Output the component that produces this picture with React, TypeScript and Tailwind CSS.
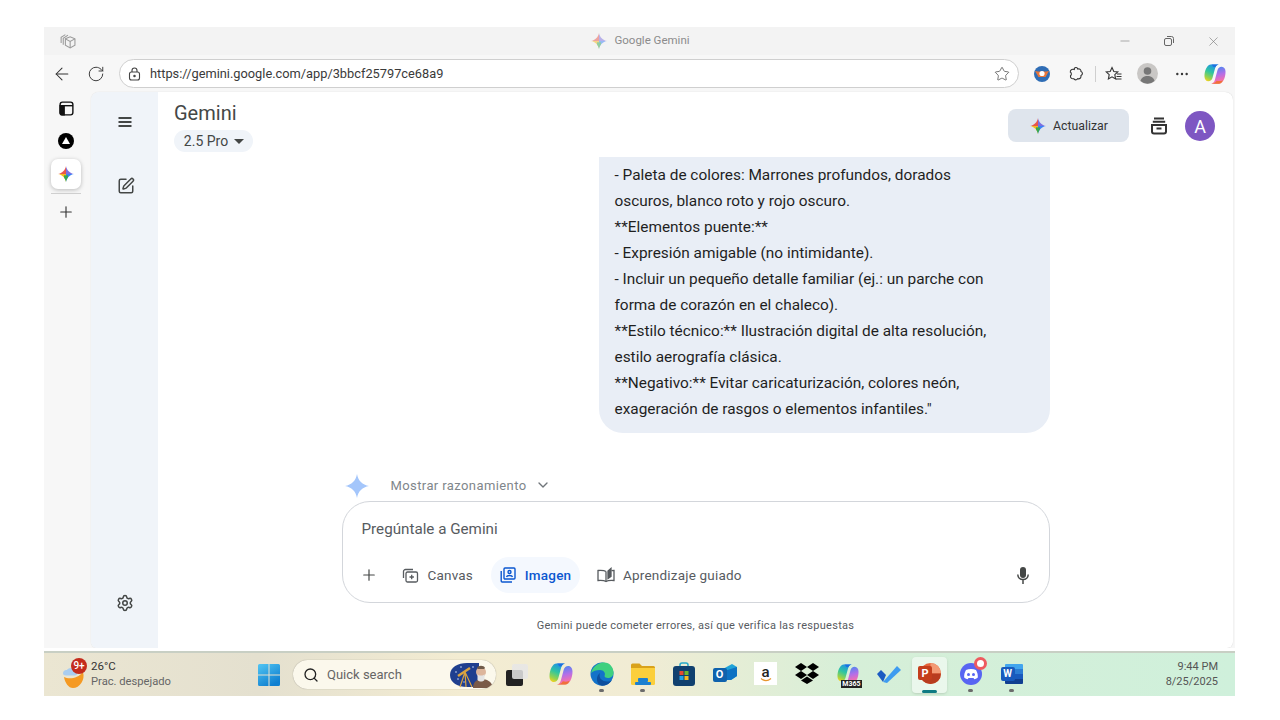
import type { ReactNode } from "react";
import { Plus, RotateCw, ArrowLeft, Star, Minus, X, ChevronDown, SquarePen, Settings, Ellipsis, Search } from "lucide-react";

const STAR = "M12 0C13 6.500 17.500 11 24 12C17.500 13 13 17.500 12 24C11 17.500 6.500 13 0 12C6.500 11 11 6.500 12 0Z";

// estrella de colores de gemini
function ColorStar({ id, size }: { id: string; size: number }) {
  return (
    <svg width={size} height={size} viewBox="0 0 24 24">
      <defs>
        <clipPath id={id}>
          <path d="M12 0C12.900 6 18 11.100 24 12C18 12.900 12.900 18 12 24C11.100 18 6 12.900 0 12C6 11.100 11.100 6 12 0Z" />
        </clipPath>
      </defs>
      <g clipPath={`url(#${id})`}>
        <rect x="0" y="0" width="12" height="12" fill="#e8564b" />
        <rect x="12" y="0" width="12" height="12" fill="#7c6fe0" />
        <rect x="12" y="12" width="12" height="12" fill="#3b82f6" />
        <rect x="0" y="12" width="12" height="12" fill="#f3b820" />
        <rect x="9" y="14" width="6" height="10" fill="#34a853" />
      </g>
    </svg>
  );
}

function CopilotIcon({ id, size }: { id: string; size: number }) {
  return (
    <svg width={size} height={size} viewBox="0 0 24 24">
      <defs>
        <linearGradient id={`${id}a`} x1="0.6" y1="0" x2="0.2" y2="1">
          <stop offset="0" stopColor="#1f8fe8" />
          <stop offset="0.45" stopColor="#2fc6a0" />
          <stop offset="0.8" stopColor="#9ad24a" />
          <stop offset="1" stopColor="#f7d21f" />
        </linearGradient>
        <linearGradient id={`${id}b`} x1="0.5" y1="0" x2="0.7" y2="1">
          <stop offset="0" stopColor="#4f86f0" />
          <stop offset="0.45" stopColor="#b36fe8" />
          <stop offset="0.8" stopColor="#f26fb0" />
          <stop offset="1" stopColor="#f58a5a" />
        </linearGradient>
      </defs>
      <path d="M7.500 1.500h8.500c-2.300.5-3.300 2-3.900 4.200L9.300 16.200C8.700 18.500 7 20 4.800 20 2 20 .5 17.500 .5 14.500.5 8 3.500 1.500 7.500 1.500Z" fill={`url(#${id}a)`} />
      <path d="M16.500 22.500H8c2.300-.5 3.300-2 3.900-4.200l2.800-10.500C15.300 5.500 17 4 19.200 4c2.800 0 4.300 2.500 4.300 5.500 0 6.500-3 13-7 13Z" fill={`url(#${id}b)`} />
      <path d="M8 1.500h8c-2 .5-3 1.500-3.600 3L10 4.200C9.600 3 9 2 8 1.500Z" fill="#1c6fe0" />
      <path d="M8 22.500h8c2-.2 3.500-1.500 4.500-3.800-1.800 1-4 1.200-6.700.6-.8 1.800-2.300 2.800-5.800 3.200Z" fill="#f0713a" />
    </svg>
  );
}

function TaskItem({ children, dot, active }: { children: ReactNode; dot?: boolean; active?: boolean }) {
  return (
    <div className="relative flex h-[44px] w-[41px] shrink-0 items-center justify-center">
      {active && <div className="absolute left-[3px] top-[4px] h-[36px] w-[35px] rounded bg-white/50 shadow-sm" />}
      <div className="relative flex h-[24px] w-[24px] -translate-y-[1px] items-center justify-center">{children}</div>
      {dot && <div className="absolute bottom-[5px] left-[18px] h-[3px] w-[5px] rounded-full bg-[#6b6b6b]" />}
      {active && <div className="absolute bottom-[4px] left-[13px] h-[3px] w-[15px] rounded-full bg-[#0f7b83]" />}
    </div>
  );
}

export default function App() {
  return (
    <div className="h-[720px] w-[1280px] overflow-hidden bg-white pl-[44px] pt-[27px] text-[#444746] [font-family:Roboto,'Noto_Sans',sans-serif]">
      <div className="flex h-[669px] w-[1191px] flex-col bg-[#f7f7f7]">
        {/* barra de titulo */}
        <div className="relative flex h-[28px] items-center bg-[#f3f3f3] pl-[15px] pr-[14px]">
          <svg width="17" height="17" viewBox="0 0 16 16" fill="none" stroke="#9a9a9a" strokeWidth="1">
            <path d="M6 5.500 10.500 3.500 15 5.500v6L10.500 14 6 11.500Z" />
            <path d="M6 5.500 10.500 8 15 5.500M10.500 8v6" />
            <path d="M4 11V5l4.500-3M2 9.500V4l4-2.500" />
          </svg>
          <div className="flex flex-1 items-center justify-center gap-[7px] pl-[87px] text-[11.500px] text-[#8b8b8b]">
            <span className="opacity-50"><ColorStar id="tab" size={16} /></span>
            <span>Google Gemini</span>
          </div>
          <div className="flex items-center gap-[31px] text-[#777]">
            <Minus size={14} strokeWidth={1} />
            <svg width="12" height="12" viewBox="0 0 12 12" fill="none" stroke="#666" strokeWidth="1">
              <rect x="1.500" y="3.500" width="7" height="7" rx="1.500" />
              <path d="M4 1.500h4.500a2 2 0 0 1 2 2V8" />
            </svg>
            <X size={15} strokeWidth={1} />
          </div>
        </div>

        {/* barra de navegacion */}
        <div className="flex h-[37px] items-center pl-[8px] pr-[8px]">
          <ArrowLeft size={20} strokeWidth={1.25} className="text-[#333]" />
          <RotateCw size={18} strokeWidth={1.25} className="ml-[15px] text-[#333]" />
          <div className="ml-[14px] flex h-[29px] w-[900px] shrink-0 items-center rounded-full border border-[#cfcfcf] bg-white pl-[8px] pr-[8px]">
            <svg width="13" height="14" viewBox="0 0 13 14" fill="none" stroke="#444" strokeWidth="1.100">
              <rect x="1.500" y="5" width="10" height="8" rx="2" />
              <path d="M4 5V3.500a2.500 2.500 0 0 1 5 0V5" />
              <circle cx="6.500" cy="9" r=".7" fill="#444" />
            </svg>
            <span className="ml-[9px] text-[12.800px] text-[#3a3a3a]">https://gemini.google.com/app/3bbcf25797ce68a9</span>
            <Star size={16} strokeWidth={1.100} className="ml-auto text-[#444]" />
          </div>
          <svg width="16" height="16" viewBox="0 0 16 16" className="ml-[15px]">
            <circle cx="8" cy="8" r="8" fill="#2f6db5" />
            <path d="M1 5c3 .8 11 .8 14 0l-3.500 6h-7Z" fill="#e8763a" />
            <circle cx="8" cy="7.500" r="2.600" fill="#fff" />
          </svg>
          <svg width="16" height="16" viewBox="0 0 16 16" fill="none" stroke="#333" strokeWidth="1.100" className="ml-[18px]">
            <path d="M6.300 2.600c.8-1.600 3-1.300 3.400.4 2-.4 3.500.4 3.300 2.600 1.900.6 1.900 3.200 0 3.800.3 2.600-1.200 3.900-3.500 3.300-.8 1.500-3 1.500-3.700 0-2.200.4-3.700-.9-3.300-3 1.200-.8 1.200-2.800-.2-3.600-.2-2.300 1.700-3.300 4-2.500Z" />
          </svg>
          <div className="ml-[11px] h-[16px] w-px bg-[#cfcfcf]" />
          <svg width="17" height="16" viewBox="0 0 17 16" fill="none" stroke="#333" strokeWidth="1.100" className="ml-[9px]">
            <path d="M7 1.500 8.800 5.500l4 .4-3 2.800.8 4.300L7 10.800 3.400 13l.8-4.300-3-2.800 4-.4Z" />
            <path d="M12 8h4.500M11.500 10.500h5M11 13h5.500" />
          </svg>
          <svg width="21" height="21" viewBox="0 0 21 21" className="ml-[15px]">
            <circle cx="10.500" cy="10.500" r="10.500" fill="#c9c7c5" />
            <circle cx="10.500" cy="8" r="3.800" fill="#777" />
            <path d="M3.500 18c.8-3.500 3.500-5 7-5s6.200 1.500 7 5a10.500 10.500 0 0 1-14 0Z" fill="#777" />
          </svg>
          <Ellipsis size={16} strokeWidth={1.600} className="ml-[16px] text-[#333]" />
          <span className="ml-[14px] flex"><CopilotIcon id="cpa" size={22} /></span>
        </div>

        {/* cuerpo */}
        <div className="flex h-[556px]">
          <div className="flex w-[47px] flex-col items-center pr-[3px] pt-[9px]">
            <svg width="15" height="15" viewBox="0 0 16 16" fill="none" stroke="#111" strokeWidth="1.500">
              <rect x="1.200" y="1.200" width="13.600" height="13.600" rx="2.500" />
              <path d="M1.200 5h13.600" />
              <path d="M1.200 5h4.300v9.800H3.500a2.300 2.300 0 0 1-2.300-2.300Z" fill="#111" />
            </svg>
            <svg width="16" height="16" viewBox="0 0 16 16" className="mt-[17px]">
              <circle cx="8" cy="8" r="8" fill="#000" />
              <path d="M8 4 12 11H4Z" fill="#fff" />
            </svg>
            <div className="mt-[10px] flex h-[30px] w-[30px] items-center justify-center rounded-[7px] bg-white shadow-[0_1px_4px_rgba(0,0,0,0.25)]">
              <ColorStar id="side" size={16} />
            </div>
            <div className="mt-[4px] h-px w-[30px] bg-[#cfcfcf]" />
            <Plus size={18} strokeWidth={1.500} className="mt-[9px] text-[#333]" />
          </div>

          <div className="flex w-[1142px] overflow-hidden rounded-t-[8px] rounded-b-[6px] bg-white shadow-[0_0_1px_rgba(0,0,0,0.2)]">
            <div className="flex w-[67px] flex-col items-center bg-[#f0f4f9] pb-[36px] pl-[1px] pt-[21px]">
              <svg width="18" height="18" viewBox="0 0 18 18" fill="none" stroke="#444746" strokeWidth="1.800">
                <path d="M2.500 5h13M2.500 9h13M2.500 13h13" />
              </svg>
              <SquarePen size={18} strokeWidth={2} className="mt-[46px] translate-x-[1px] text-[#444746]" />
              <Settings size={18} strokeWidth={2} className="mt-auto text-[#444746]" />
            </div>

            <div className="flex min-w-0 flex-1 flex-col">
              <div className="flex h-[65px] items-start pl-[16px] pr-[18px]">
                <div className="pt-[8px]">
                  <div className="text-[20px] leading-[26px] text-[#444746]">Gemini</div>
                  <div className="mt-[4px] flex h-[22px] w-[79px] items-center justify-center gap-[6px] rounded-full bg-[#f0f4f9] pl-[1px] text-[14px]">
                    <span>2.5 Pro</span>
                    <svg width="10" height="5" viewBox="0 0 10 5"><path d="M0 0h10L5 5Z" fill="#444746" /></svg>
                  </div>
                </div>
                <div className="ml-auto mt-[17px] flex h-[33px] w-[121px] items-center justify-center gap-[7px] rounded-[8px] bg-[#dfe5ed] pl-[1px] text-[12.300px] text-[#333]">
                  <ColorStar id="upd" size={16} />
                  <span className="pt-[2px]">Actualizar</span>
                </div>
                <svg width="18" height="18" viewBox="0 0 18 18" fill="none" stroke="#333" strokeWidth="2" className="ml-[21px] mt-[25px]">
                  <path d="M4 1.500h10M2.800 4.800h12.400" />
                  <path d="M2 8h14v6.500a2 2 0 0 1-2 2H4a2 2 0 0 1-2-2Z" />
                  <path d="M6.500 11.500h5" />
                </svg>
                <div className="ml-[17px] mt-[19px] flex h-[30px] w-[30px] items-center justify-center rounded-full bg-[#7e57c2] text-[18px] text-white">A</div>
              </div>

              <div className="mx-auto w-[708px]">
                <div className="ml-auto w-[451px] rounded-b-[24px] bg-[#e9eef6] pb-[11px] pl-[16px] pr-[40px] pt-[5px] text-[15.400px] leading-[26px] text-[#1f1f1f]">
                  <p>- Paleta de colores: Marrones profundos, dorados oscuros, blanco roto y rojo oscuro.</p>
                  <p>**Elementos puente:**</p>
                  <p>- Expresión amigable (no intimidante).</p>
                  <p>- Incluir un pequeño detalle familiar (ej.: un parche con forma de corazón en el chaleco).</p>
                  <p>**Estilo técnico:** Ilustración digital de alta resolución, estilo aerografía clásica.</p>
                  <p>**Negativo:** Evitar caricaturización, colores neón, exageración de rasgos o elementos infantiles."</p>
                </div>

                <div className="mt-[40px] flex h-[24px] items-center pl-[3px]">
                  <svg width="24" height="24" viewBox="0 0 24 24" className="translate-y-[1px]"><path d={STAR} fill="#a4c6fb" /></svg>
                  <span className="ml-[22px] translate-y-[1px] text-[13px] tracking-[0.4px] text-[#80868b]">Mostrar razonamiento</span>
                  <ChevronDown size={16} strokeWidth={2} className="ml-[8px] text-[#70757a]" />
                </div>

                <div className="mt-[4px] flex h-[102px] flex-col rounded-[28px] border border-[#d3d6db] pl-[19px] pr-[18px]">
                  <div className="pt-[17px] text-[15.200px] leading-[20px] text-[#575b5f]">Pregúntale a Gemini</div>
                  <div className="-ml-[2px] mt-[18px] flex h-[36px] items-center text-[13.500px] tracking-[0.2px] text-[#575b5f]">
                    <Plus size={18} strokeWidth={1.600} className="text-[#444746]" />
                    <svg width="17" height="17" viewBox="0 0 17 17" fill="none" stroke="#575b5f" strokeWidth="1.300" className="ml-[24px]">
                      <path d="M1.500 11V4.500a2 2 0 0 1 2-2H11" />
                      <rect x="4" y="5" width="11.500" height="10" rx="1.500" />
                      <path d="M9.700 7.800v4.400M7.500 10h4.400" />
                    </svg>
                    <span className="ml-[9px]">Canvas</span>
                    <div className="ml-[18px] flex h-[36px] w-[89px] items-center justify-center gap-[9px] rounded-full bg-[#f4f8fe] font-medium text-[#0b57d0]">
                      <svg width="16" height="16" viewBox="0 0 16 16" fill="none" stroke="#0b57d0" strokeWidth="1.400">
                        <rect x="4" y="1" width="11" height="11" rx="1" />
                        <circle cx="9.500" cy="5" r="1.500" />
                        <path d="M6.500 10c.5-2 5.500-2 6 0" />
                        <path d="M1.200 4v10a1 1 0 0 0 1 1H12" />
                      </svg>
                      <span>Imagen</span>
                    </div>
                    <svg width="18" height="16" viewBox="0 0 18 16" fill="none" stroke="#575b5f" strokeWidth="1.300" className="ml-[17px]">
                      <path d="M9 4.500C7.500 3.500 4 3.300 1 3.500v10c3-.2 6.500 0 8 1 1.500-1 5-1.200 8-1v-10c-1 0-2 0-2.500.1" />
                      <path d="M9 4.500v10" />
                      <path d="M11 11.500V4l3-2.500v8Z" fill="#575b5f" />
                    </svg>
                    <span className="ml-[8px]">Aprendizaje guiado</span>
                    <svg width="12" height="17" viewBox="0 0 12 17" className="ml-auto mr-[2px]">
                      <rect x="3" y="0" width="6" height="11" rx="3" fill="#444746" />
                      <path d="M.8 7.500c0 3 2.300 5 5.200 5s5.200-2 5.200-5M6 12.500V17" fill="none" stroke="#444746" strokeWidth="1.500" />
                    </svg>
                  </div>
                </div>

                <div className="mt-[15px] text-center text-[11px] tracking-[0.28px] text-[#575b5f]">Gemini puede cometer errores, así que verifica las respuestas</div>
              </div>
            </div>
          </div>
        </div>

        <div className="h-[3px] bg-white" />

        {/* barra de tareas */}
        <div className="flex h-[45px] items-center border-t-2 border-[#c8cfc4] bg-[linear-gradient(90deg,#ebe6d2_0%,#e4e0cf_18%,#f3ecd2_35%,#f1ecd4_50%,#d6efd8_68%,#cff0db_100%)] text-[#444]">
          <div className="flex w-[206px] items-center pl-[17px]">
            <div className="relative h-[30px] w-[30px]">
              <svg width="26" height="28" viewBox="0 0 26 28" className="absolute left-[1px] top-[1px]">
                <path d="M2 16c5 2.500 14 1.500 19-5 2.500 8-3.500 16-10 16-4.500 0-8-5-9-11Z" fill="#f59a23" />
                <path d="M1 12.500C1 10 3 8.500 5 9c1-2 5-2.500 6.500 0 2-.5 4 1 4 3s-2 2.500-3.500 2.500H4c-1.800 0-3-1-3-2Z" fill="#a9cdf0" />
              </svg>
              <div className="absolute left-[10px] top-[-2px] flex h-[16px] w-[16px] items-center justify-center rounded-full bg-[#c42b1c] text-[10px] font-medium leading-none text-white">9+</div>
            </div>
            <div className="mb-[2px] text-[11.500px] leading-[15px]">
              <div className="text-[#333]">26°C</div>
              <div className="text-[11.200px] text-[#666]">Prac. despejado</div>
            </div>
          </div>
          <div className="flex w-[38px] justify-center">
            <svg width="22" height="22" viewBox="0 0 22 22">
              <defs>
                <linearGradient id="win" x1="0" y1="0" x2="0.6" y2="1">
                  <stop offset="0" stopColor="#52c6f3" />
                  <stop offset="1" stopColor="#0f7fd0" />
                </linearGradient>
              </defs>
              <path d="M0 1.500A1.500 1.500 0 0 1 1.500 0h9v10.500H0ZM11.500 0h9A1.500 1.500 0 0 1 22 1.500v9H11.500ZM0 11.500h10.500V22h-9A1.500 1.500 0 0 1 0 20.500ZM11.500 11.500H22v9a1.500 1.500 0 0 1-1.500 1.500h-9Z" fill="url(#win)" />
            </svg>
          </div>
          <div className="ml-[5px] flex h-[29px] w-[203px] items-center overflow-hidden rounded-full bg-[#fbf8ec] pl-[10px] shadow-[0_0_1px_rgba(0,0,0,0.4)]">
            <Search size={16} strokeWidth={2} className="text-[#222]" />
            <span className="ml-[8px] text-[13px] text-[#666]">Quick search</span>
            <svg width="44" height="26" viewBox="0 0 44 26" className="ml-auto mr-[3px]">
              <path d="M1 13C1 5 9 1 18 1h12v24H18C9 25 1 21 1 13Z" fill="#1f3f8f" />
              <circle cx="7" cy="10" r=".8" fill="#cfe0ff" />
              <circle cx="12" cy="5" r=".8" fill="#cfe0ff" />
              <circle cx="9" cy="17" r=".8" fill="#cfe0ff" />
              <circle cx="24" cy="5" r=".8" fill="#cfe0ff" />
              <circle cx="15" cy="20" r=".7" fill="#cfe0ff" />
              <path d="M9 14 21 6" stroke="#d9a441" strokeWidth="2.500" fill="none" />
              <path d="M16 10l-5 15M16 10l1 15M16 10l7 15" stroke="#d9a441" strokeWidth="1.200" fill="none" />
              <path d="M24 26c0-7 5-9 9-9s10 2 11 9Z" fill="#7a5a48" />
              <circle cx="32" cy="10" r="5" fill="#dcb59c" />
              <path d="M28 6c1-3 7-3 8 0l-1 1h-6Z" fill="#6f5a4a" />
              <path d="M28.500 12c1 2 6 2 7 0v6c-2 2-5 2-7 0Z" fill="#e4e4e4" />
            </svg>
          </div>

          <div className="ml-[4px] flex w-[34px] justify-center">
            <svg width="24" height="24" viewBox="0 0 24 24">
              <rect x="1" y="7" width="17" height="16" rx="2" fill="#222" />
              <rect x="7" y="1" width="16" height="15" rx="2" fill="#e6e6e6" fillOpacity="0.85" />
            </svg>
          </div>
          <div className="ml-[6px] flex">
            <TaskItem><CopilotIcon id="cpb" size={24} /></TaskItem>
            <TaskItem dot>
              <svg width="24" height="24" viewBox="0 0 24 24">
                <circle cx="12" cy="12" r="11.500" fill="#1373c9" />
                <path d="M1 11C3 3 10 .5 14 .5c6 0 9.500 5 9.500 10 0 4-3 5.500-5.500 5.500-2 0-3.500-1-3.500-2 1.500-3-1-6-4.500-6C6 8 3 9 1 11Z" fill="#3fd07f" />
                <path d="M11 23.500C6 22 5.500 14 10 11c-1.500 4 1 8.500 7 8.500 2 0 3.500-.5 5-1.500-2.500 4-7 6.500-11 5.500Z" fill="#0e4f9e" />
              </svg>
            </TaskItem>
            <TaskItem dot>
              <svg width="24" height="22" viewBox="0 0 24 22">
                <path d="M0 2a1.500 1.500 0 0 1 1.500-1.500h7L11 3h11.500A1.500 1.500 0 0 1 24 4.500V8H0Z" fill="#d9a21b" />
                <path d="M0 5h24v15.500a1.500 1.500 0 0 1-1.500 1.500h-21A1.500 1.500 0 0 1 0 20.500Z" fill="#fbcf3c" />
                <rect x="7" y="15" width="10" height="4" rx="1" fill="#1c80d0" />
                <rect x="4" y="19" width="16" height="3" rx="1" fill="#1c80d0" />
              </svg>
            </TaskItem>
            <TaskItem>
              <svg width="22" height="24" viewBox="0 0 22 24">
                <path d="M7 6V3a2 2 0 0 1 2-2h4a2 2 0 0 1 2 2v3" fill="none" stroke="#26a9c9" strokeWidth="1.500" />
                <rect x="0" y="4" width="22" height="20" rx="3" fill="#10406f" />
                <rect x="6.500" y="9" width="4" height="4" fill="#e8492f" />
                <rect x="11.500" y="9" width="4" height="4" fill="#70b62b" />
                <rect x="6.500" y="14" width="4" height="4" fill="#22a2e8" />
                <rect x="11.500" y="14" width="4" height="4" fill="#f8b81f" />
              </svg>
            </TaskItem>
            <TaskItem>
              <div className="relative h-[20px] w-[24px]">
                <svg width="24" height="20" viewBox="0 0 24 20" className="absolute inset-0">
                  <path d="M8 6 19 0l5 3v9l-6 4H8Z" fill="#1fa3d8" />
                  <path d="M8 8l16-5v9l-6 4H8Z" fill="#0d72c3" />
                </svg>
                <div className="absolute left-0 top-[4px] flex h-[14px] w-[14px] items-center justify-center rounded-[2px] bg-[#0f62ad] text-[11px] font-bold leading-none text-white">O</div>
              </div>
            </TaskItem>
            <TaskItem>
              <div className="flex h-[23px] w-[23px] flex-col items-center justify-center bg-white text-[15px] font-medium leading-[12px] text-[#222]">
                a
                <svg width="12" height="4" viewBox="0 0 12 4"><path d="M1 .5c3 2.500 7 2.500 10 0" fill="none" stroke="#e8962e" strokeWidth="1.200" /></svg>
              </div>
            </TaskItem>
            <TaskItem>
              <svg width="24" height="21" viewBox="0 0 24 21" fill="#000">
                <path d="M6 0 12 4 6 8 0 4ZM18 0l6 4-6 4-6-4ZM6 8l6 4-6 4-6-4ZM18 8l6 4-6 4-6-4ZM6 17.500l6-4 6 4-6 3.500Z" />
              </svg>
            </TaskItem>
            <TaskItem>
              <CopilotIcon id="cpc" size={22} />
              <div className="absolute bottom-[-2px] right-[-2px] bg-[#222] px-[1px] text-[7px] font-bold leading-[8px] text-white">M365</div>
            </TaskItem>
            <TaskItem>
              <svg width="24" height="18" viewBox="0 0 24 18">
                <path d="M0 9 4 5 9 10 6 17Z" fill="#1c5bc2" />
                <path d="M6 17 20 1 24 5 10 18Z" fill="#3e9cf0" />
              </svg>
            </TaskItem>
            <TaskItem active>
              <div className="relative h-[21px] w-[23px]">
                <svg width="21" height="21" viewBox="0 0 21 21" className="absolute right-0 top-0">
                  <circle cx="10.500" cy="10.500" r="10.500" fill="#e5633a" />
                  <path d="M10.500 0a10.500 10.500 0 0 1 10.500 10.500H10.500Z" fill="#f39a74" />
                  <path d="M0 10.500h21a10.500 10.500 0 0 1-21 0Z" fill="#b83c1f" />
                </svg>
                <div className="absolute left-0 top-[3px] flex h-[14px] w-[14px] items-center justify-center rounded-[2px] bg-[#c43e1c] text-[11px] font-bold leading-none text-white">P</div>
              </div>
            </TaskItem>
            <TaskItem dot>
              <svg width="22" height="22" viewBox="0 0 22 22">
                <circle cx="11" cy="11" r="11" fill="#5865f2" />
                <path d="M6 7c3-1.300 7-1.300 10 0 1.500 2.500 2 5 1.800 7.500-1.300 1-2.500 1.500-3.500 1.800l-.8-1.300H8.500l-.8 1.300c-1-.3-2.200-.8-3.500-1.800C4 12 4.500 9.500 6 7Z" fill="#fff" />
                <circle cx="8.500" cy="11.500" r="1.500" fill="#5865f2" />
                <circle cx="13.500" cy="11.500" r="1.500" fill="#5865f2" />
              </svg>
              <div className="absolute right-[-4px] top-[-5px] flex h-[13px] w-[13px] items-center justify-center rounded-full bg-[#ee5a5f]">
                <div className="h-[7px] w-[7px] rounded-full bg-white" />
              </div>
            </TaskItem>
            <TaskItem dot>
              <div className="relative h-[20px] w-[22px]">
                <svg width="18" height="20" viewBox="0 0 18 20" className="absolute right-0 top-0">
                  <path d="M1 0h16a1 1 0 0 1 1 1v4H0V1a1 1 0 0 1 1-1Z" fill="#41a5ee" />
                  <rect x="0" y="5" width="18" height="5" fill="#2b7cd3" />
                  <rect x="0" y="10" width="18" height="5" fill="#185abd" />
                  <path d="M0 15h18v4a1 1 0 0 1-1 1H1a1 1 0 0 1-1-1Z" fill="#103f91" />
                </svg>
                <div className="absolute left-0 top-[3px] flex h-[14px] w-[14px] items-center justify-center rounded-[2px] bg-[#185abd] text-[10px] font-bold leading-none text-white">W</div>
              </div>
            </TaskItem>
          </div>
          <div className="mb-[2px] ml-auto pr-[17px] text-right text-[11px] leading-[15px] text-[#555]">
            <div>9:44 PM</div>
            <div>8/25/2025</div>
          </div>
        </div>
      </div>
    </div>
  );
}
